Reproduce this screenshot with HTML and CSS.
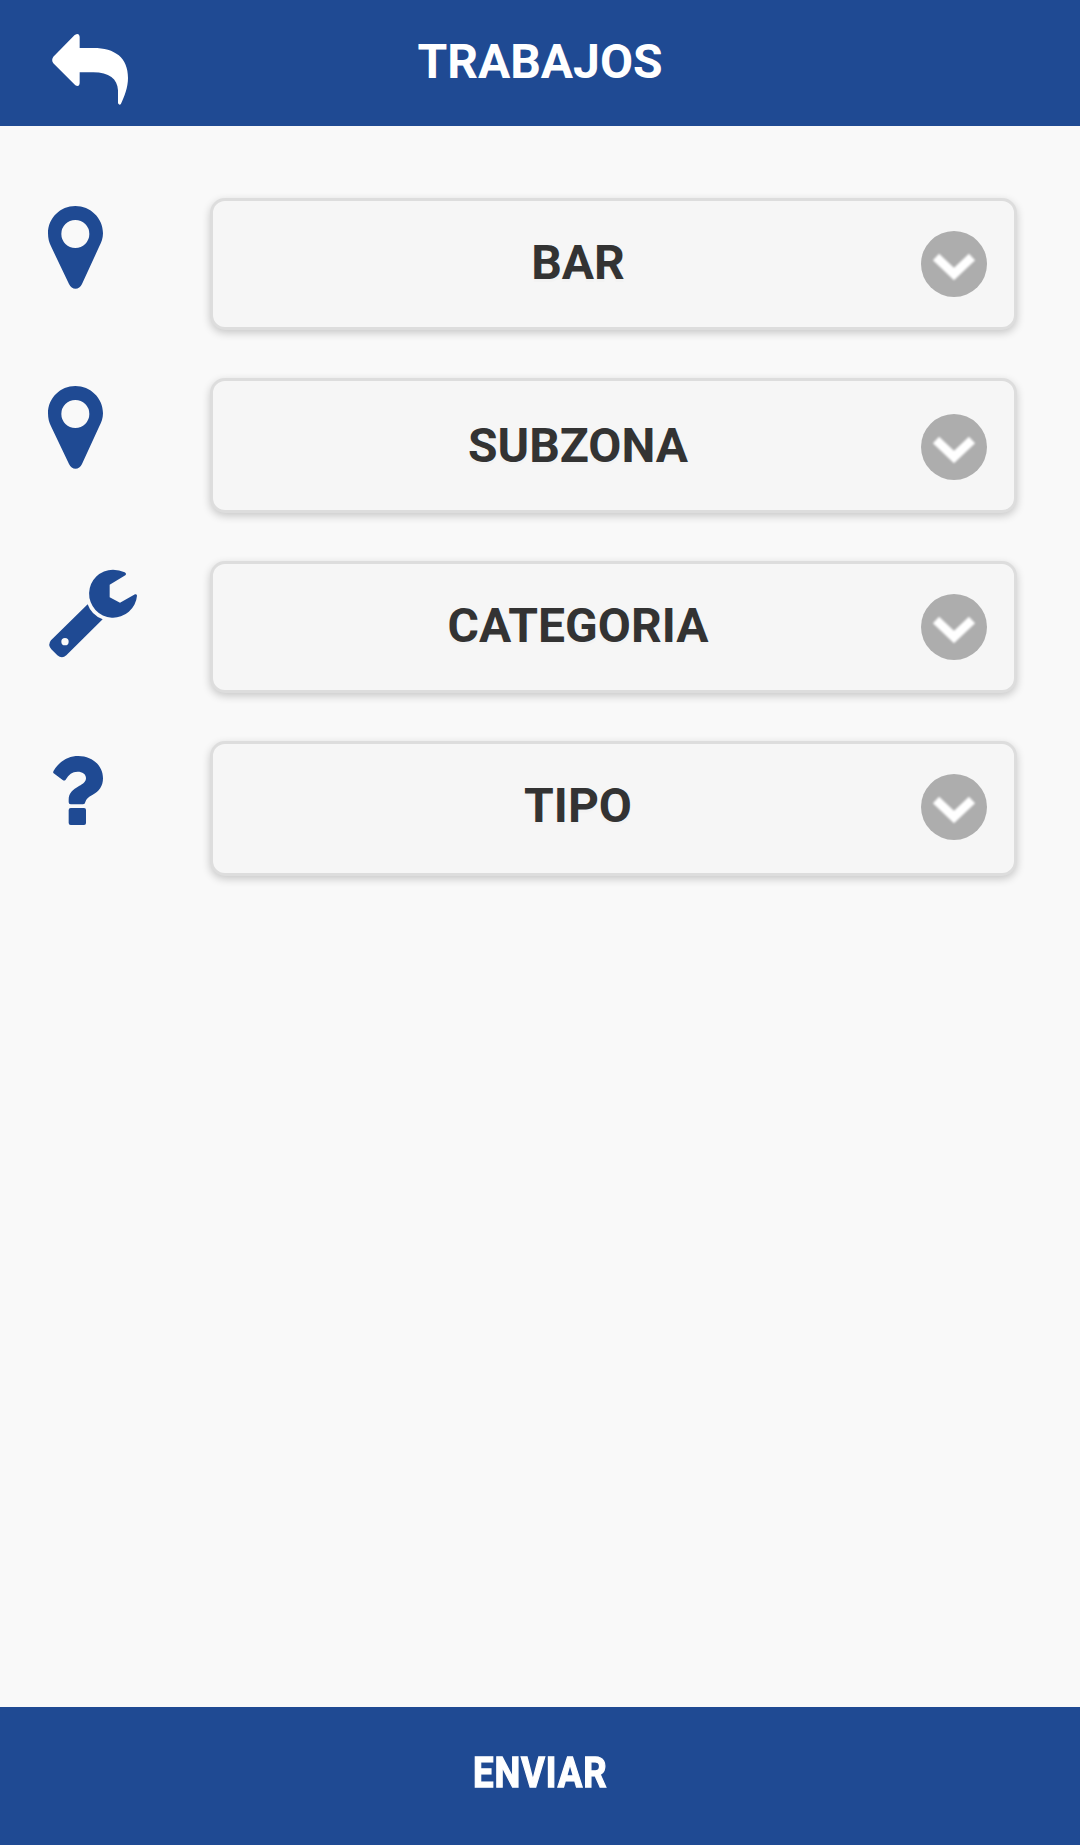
FILE: index.html
```html
<!DOCTYPE html>
<html lang="es">
<head>
  <meta charset="UTF-8" />
  <meta name="viewport" content="width=device-width, initial-scale=1.0"/>
  <title>Trabajos</title>
  <link rel="stylesheet" href="styles.css">
</head>
<body>

  <header class="header">
    <a class="back" href="#" aria-label="Volver">
      <svg viewBox="0 0 390 348">
        <path d="M134 75Q148 67 149 80V114H190C255 114 294 143 294 204C294 232 283 260 273 281Q269 288 264 280V241C263 207 237 187 190 187H149V219Q148 232 136 226L70 160Q63 150 70 140Z"/>
      </svg>
    </a>
    <h1>TRABAJOS</h1>
  </header>

  <main class="form">
    <div class="row">
      <svg class="icon" viewBox="0 24 390 330">
        <path fill-rule="evenodd" d="M136 48C181 48 219 84 219 130C219 145 214 157 208 169L156 282C148 301 125 301 117 282L63 169C57 157 54 145 54 130C54 84 91 48 136 48ZM136 90A42 42 0 1 0 136 174A42 42 0 1 0 136 90Z"/>
      </svg>
      <button class="select" type="button">
        <span class="label">BAR</span>
        <svg class="arrow" viewBox="0 0 66 66"><circle cx="33" cy="33" r="33"/><path d="M15 26L33 43L51 26"/></svg>
      </button>
    </div>

    <div class="row">
      <svg class="icon" viewBox="0 24 390 330">
        <path fill-rule="evenodd" d="M136 48C181 48 219 84 219 130C219 145 214 157 208 169L156 282C148 301 125 301 117 282L63 169C57 157 54 145 54 130C54 84 91 48 136 48ZM136 90A42 42 0 1 0 136 174A42 42 0 1 0 136 90Z"/>
      </svg>
      <button class="select select-subzone" type="button">
        <span class="label">SUBZONA</span>
        <svg class="arrow" viewBox="0 0 66 66"><circle cx="33" cy="33" r="33"/><path d="M15 26L33 43L51 26"/></svg>
      </button>
    </div>

    <div class="row">
      <svg class="icon" viewBox="0 33 390 330">
        <path d="M284 67Q291 71 286 76L239 104V142L270 158L315 133Q321 131 321 137A72 72 0 1 1 249 59Q268 59 284 67Z"/>
        <path fill-rule="evenodd" d="M173 163Q184 195 218 208L109 316Q96 328 82 316L64 298Q52 284 63 271ZM105 264A11 11 0 1 0 105 286A11 11 0 1 0 105 264Z"/>
      </svg>
      <button class="select" type="button">
        <span class="label">CATEGORIA</span>
        <svg class="arrow" viewBox="0 0 66 66"><circle cx="33" cy="33" r="33"/><path d="M15 26L33 43L51 26"/></svg>
      </button>
    </div>

    <div class="row">
      <svg class="icon" viewBox="0 33 390 330">
        <path d="M71 122C91 91 116 78 145 78C187 78 219 107 219 145C219 169 207 184 187 195C175 201 168 207 166 216Q165 223 159 223H122Q116 223 116 217V209C116 190 128 179 147 168C160 161 168 155 168 144C168 132 157 125 143 125C126 125 117 133 107 149Q103 154 98 150L71 130Q68 127 71 122Z"/>
        <rect x="116" y="234" width="52" height="51" rx="6"/>
      </svg>
      <button class="select select-type" type="button">
        <span class="label">TIPO</span>
        <svg class="arrow" viewBox="0 0 66 66"><circle cx="33" cy="33" r="33"/><path d="M15 26L33 43L51 26"/></svg>
      </button>
    </div>
  </main>

  <button class="send" type="button"><span>ENVIAR</span></button>

</body>
</html>
```

FILE: styles.css
```css
* {
  box-sizing: border-box;
}

body {
  margin: 0;
  min-height: 100vh;
  display: flex;
  flex-direction: column;
  background: #f9f9f9;
  color: #333;
  font-family: Roboto, sans-serif;
}

.header {
  display: grid;
  grid-template-columns: 160px 1fr 160px;
  height: 126px;
  background: #1f4a93;
  color: #fff;
}

.header h1 {
  margin: 0;
  padding-top: 34px;
  font-size: 48px;
  line-height: 56px;
  font-weight: 700;
  text-align: center;
}

.back {
  padding: 10px 0 0 30px;
}

.back svg {
  display: block;
  width: 130px;
  height: 116px;
  fill: #fff;
}

.form {
  flex: 1;
  display: flex;
  flex-direction: column;
  gap: 48px;
  padding: 72px 63px 0 30px;
}

.row {
  display: flex;
  align-items: flex-start;
  justify-content: space-between;
}

.icon {
  width: 130px;
  height: 110px;
  fill: #1f4a93;
}

.select {
  display: flex;
  align-items: flex-start;
  width: 807px;
  height: 132px;
  padding: 30px 27px 0 22px;
  border: 3px solid #ddd;
  border-radius: 15px;
  background: #f6f6f6;
  box-shadow: 0 3px 9px rgba(0, 0, 0, 0.2);
  color: #333;
  font-family: inherit;
}

.select-subzone {
  height: 135px;
  padding-top: 33px;
}

.select-type {
  height: 135px;
}

.label {
  flex: 1;
  padding-top: 4px;
  font-size: 48px;
  line-height: 56px;
  font-weight: 700;
  text-align: center;
  text-shadow: 0 3px 0 #f3f3f3;
}

.arrow {
  width: 66px;
  height: 66px;
}

.arrow circle {
  fill: #adadad;
}

.arrow path {
  fill: none;
  stroke: #fff;
  stroke-width: 9;
  filter: blur(1px);
}

.send {
  height: 138px;
  padding: 0 0 8px;
  border: 0;
  background: #1f4a93;
  color: #fff;
  font-family: inherit;
  font-size: 42px;
  font-weight: 700;
}

.send span {
  display: inline-block;
  letter-spacing: 1px;
  margin-right: -1px;
  transform: scaleX(0.87);
  -webkit-text-stroke: 1.3px #fff;
}
```
